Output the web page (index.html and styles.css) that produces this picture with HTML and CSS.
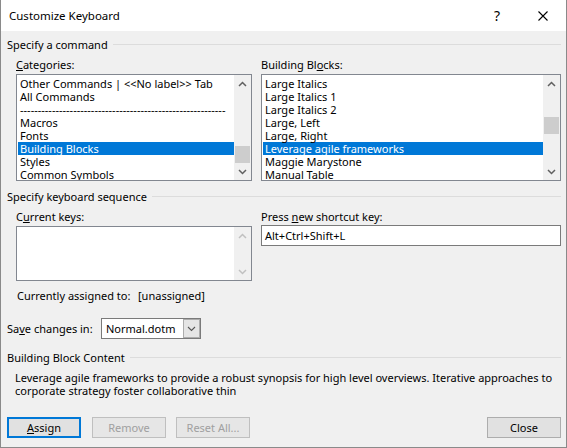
FILE: index.html
```html
<!DOCTYPE html>
<html>
<head>
<meta charset="utf-8">
<title>Customize Keyboard</title>
<link rel="stylesheet" href="styles.css">
</head>
<body>
<div class="window">
  <div class="titlebar">
    <span class="title">Customize Keyboard</span>
    <span class="cap-btn help">?</span>
    <span class="cap-btn close"><svg width="10" height="10" viewBox="0 0 10 10"><path d="M0.5 0.5 L9.5 9.5 M9.5 0.5 L0.5 9.5" stroke="#000" stroke-width="1.1" fill="none"/></svg></span>
  </div>
  <div class="content">
    <div class="group-head g1"><span>Specify a command</span><span class="rule"></span></div>
    <div class="cols c1">
      <div class="col left">
        <div class="label"><u>C</u>ategories:</div>
        <div class="listbox">
          <ul class="items">
            <li>Other Commands | &lt;&lt;No label&gt;&gt; Tab</li>
            <li>All Commands</li>
            <li>----------------------------------------------------------</li>
            <li>Macros</li>
            <li>Fonts</li>
            <li class="sel">Building Blocks</li>
            <li>Styles</li>
            <li>Common Symbols</li>
          </ul>
          <div class="vscroll">
            <div class="arrow"><svg width="9" height="6" viewBox="0 0 9 6"><path d="M1 5 L4.5 1.5 L8 5" fill="none" stroke="#606060" stroke-width="1.5"/></svg></div>
            <div class="track"><div class="thumb t-left"></div></div>
            <div class="arrow"><svg width="9" height="6" viewBox="0 0 9 6"><path d="M1 1 L4.5 4.5 L8 1" fill="none" stroke="#606060" stroke-width="1.5"/></svg></div>
          </div>
        </div>
      </div>
      <div class="col right">
        <div class="label">Building Bl<u>o</u>cks:</div>
        <div class="listbox">
          <ul class="items">
            <li>Large Italics</li>
            <li>Large Italics 1</li>
            <li>Large Italics 2</li>
            <li>Large, Left</li>
            <li>Large, Right</li>
            <li class="sel">Leverage agile frameworks</li>
            <li>Maggie Marystone</li>
            <li>Manual Table</li>
          </ul>
          <div class="vscroll">
            <div class="arrow"><svg width="9" height="6" viewBox="0 0 9 6"><path d="M1 5 L4.5 1.5 L8 5" fill="none" stroke="#606060" stroke-width="1.5"/></svg></div>
            <div class="track"><div class="thumb t-right"></div></div>
            <div class="arrow"><svg width="9" height="6" viewBox="0 0 9 6"><path d="M1 1 L4.5 4.5 L8 1" fill="none" stroke="#606060" stroke-width="1.5"/></svg></div>
          </div>
        </div>
      </div>
    </div>

    <div class="group-head g2"><span>Specify keyboard sequence</span><span class="rule"></span></div>
    <div class="cols c2">
      <div class="col left">
        <div class="label">C<u>u</u>rrent keys:</div>
        <div class="listbox keys">
          <ul class="items"></ul>
          <div class="vscroll disabled">
            <div class="arrow"><svg width="9" height="6" viewBox="0 0 9 6"><path d="M1 5 L4.5 1.5 L8 5" fill="none" stroke="#c0c0c0" stroke-width="1.5"/></svg></div>
            <div class="track"></div>
            <div class="arrow"><svg width="9" height="6" viewBox="0 0 9 6"><path d="M1 1 L4.5 4.5 L8 1" fill="none" stroke="#c0c0c0" stroke-width="1.5"/></svg></div>
          </div>
        </div>
      </div>
      <div class="col right">
        <div class="label">Press <u>n</u>ew shortcut key:</div>
        <div class="textbox">Alt+Ctrl+Shift+L</div>
      </div>
    </div>

    <div class="assigned"><span class="a-label">Currently assigned to:</span><span>[unassigned]</span></div>

    <div class="save-row">
      <span class="s-label">Sa<u>v</u>e changes in:</span>
      <div class="combo">
        <span class="combo-text">Normal.dotm</span>
        <span class="combo-btn"><svg width="9" height="6" viewBox="0 0 9 6"><path d="M1 1 L4.5 4.5 L8 1" fill="none" stroke="#555" stroke-width="1.1"/></svg></span>
      </div>
    </div>

    <div class="group-head g3"><span>Building Block Content</span><span class="rule"></span></div>
    <p class="preview">Leverage agile frameworks to provide a robust synopsis for high level overviews. Iterative approaches to corporate strategy foster collaborative thin</p>

    <div class="buttons">
      <button class="btn default"><u>A</u>ssign</button>
      <button class="btn" disabled>Remove</button>
      <button class="btn" disabled>Reset All...</button>
      <span class="spacer"></span>
      <button class="btn">Close</button>
    </div>
  </div>
</div>
</body>
</html>
```

FILE: styles.css
```css
* { box-sizing: border-box; }
html, body { margin: 0; padding: 0; }
body {
  width: 567px;
  height: 448px;
  overflow: hidden;
  font-family: "Noto Sans", "Open Sans", sans-serif;
  font-size: 11px;
  color: #000;
  background: #f0f0f0;
}
u { text-decoration: underline; text-underline-offset: 1px; }

.window {
  width: 567px;
  height: 448px;
  border: 1px solid #8a8a8a;
  border-top: none;
  background: #f0f0f0;
  display: flex;
  flex-direction: column;
}

.titlebar {
  height: 31px;
  flex: none;
  background: #fff;
  display: flex;
  align-items: center;
  padding-left: 8px;
}
.title { flex: 1; font-size: 11.5px; padding-bottom: 1px; }
.cap-btn {
  width: 46px;
  height: 31px;
  display: flex;
  align-items: center;
  justify-content: center;
}
.help { font-size: 14px; padding-bottom: 1px; }

.content {
  flex: 1;
  padding: 0 5px 0 6px;
  display: flex;
  flex-direction: column;
}

.group-head {
  height: 16px;
  line-height: 16px;
  display: flex;
  align-items: center;
  gap: 5px;
}
.group-head .rule {
  flex: 1;
  height: 1px;
  background: #dcdcdc;
  margin-top: -1px;
}
.g1 { margin-top: 6px; }
.g2 { margin-top: 8px; }
.g3 { margin-top: 11px; }

.cols {
  display: flex;
  gap: 9px;
  padding-left: 9px;
}
.col { display: flex; flex-direction: column; }
.col.left { width: 236px; }
.col.right { flex: 1; }
.label { height: 16px; line-height: 16px; }
.c1 { margin-top: 4px; }
.c1 .label { margin-bottom: 1px; }
.c2 { margin-top: 4px; }

.listbox {
  height: 107px;
  border: 1px solid #828790;
  background: #fff;
  display: flex;
  overflow: hidden;
}
.listbox.keys { height: 55px; margin-top: 1px; }
.items {
  flex: 1;
  list-style: none;
  margin: 0;
  padding: 2px 0 0 1px;
  overflow: hidden;
}
.items li {
  height: 13px;
  line-height: 13px;
  padding-left: 2px;
  white-space: nowrap;
}
.items li.sel { background: #0078d7; color: #fff; }

.vscroll {
  width: 17px;
  flex: none;
  background: #f0f0f0;
  display: flex;
  flex-direction: column;
}
.arrow {
  height: 17px;
  flex: none;
  display: flex;
  align-items: center;
  justify-content: center;
}
.track { flex: 1; padding: 0 1px; }
.thumb { height: 17px; background: #cdcdcd; }
.t-left { margin-top: 54px; }
.t-right { margin-top: 25px; }

.textbox {
  height: 21px;
  border: 1px solid #7a7a7a;
  background: #fff;
  line-height: 19px;
  padding-left: 3px;
}

.assigned {
  margin-top: 7px;
  padding-left: 10px;
  height: 16px;
  line-height: 16px;
  display: flex;
}
.a-label { width: 121px; }

.save-row {
  margin-top: 14px;
  display: flex;
  align-items: center;
}
.s-label { width: 94px; }
.combo {
  width: 100px;
  height: 21px;
  border: 1px solid #7a7a7a;
  background: #fff;
  display: flex;
}
.combo-text { flex: 1; line-height: 19px; padding-left: 4px; }
.combo-btn {
  width: 17px;
  background: #e5e5e5;
  border: 1px solid #acacac;
  display: flex;
  align-items: center;
  justify-content: center;
}

.preview {
  margin: 5px 0 0 0;
  padding-left: 8px;
  padding-right: 4px;
  line-height: 13px;
}

.buttons {
  margin-top: auto;
  margin-bottom: 9px;
  display: flex;
  gap: 10px;
  padding-right: 0;
}
.btn {
  width: 74px;
  height: 21px;
  font-family: inherit;
  font-size: 11px;
  color: #000;
  background: #e1e1e1;
  border: 1px solid #adadad;
  padding: 0;
  margin: 0;
}
.btn.default { border: 2px solid #0078d7; width: 74px; margin-right: 1px; }
.btn:disabled { color: #a0a0a0; border-color: #bfbfbf; background: #e6e6e6; }
.spacer { flex: 1; }
```
